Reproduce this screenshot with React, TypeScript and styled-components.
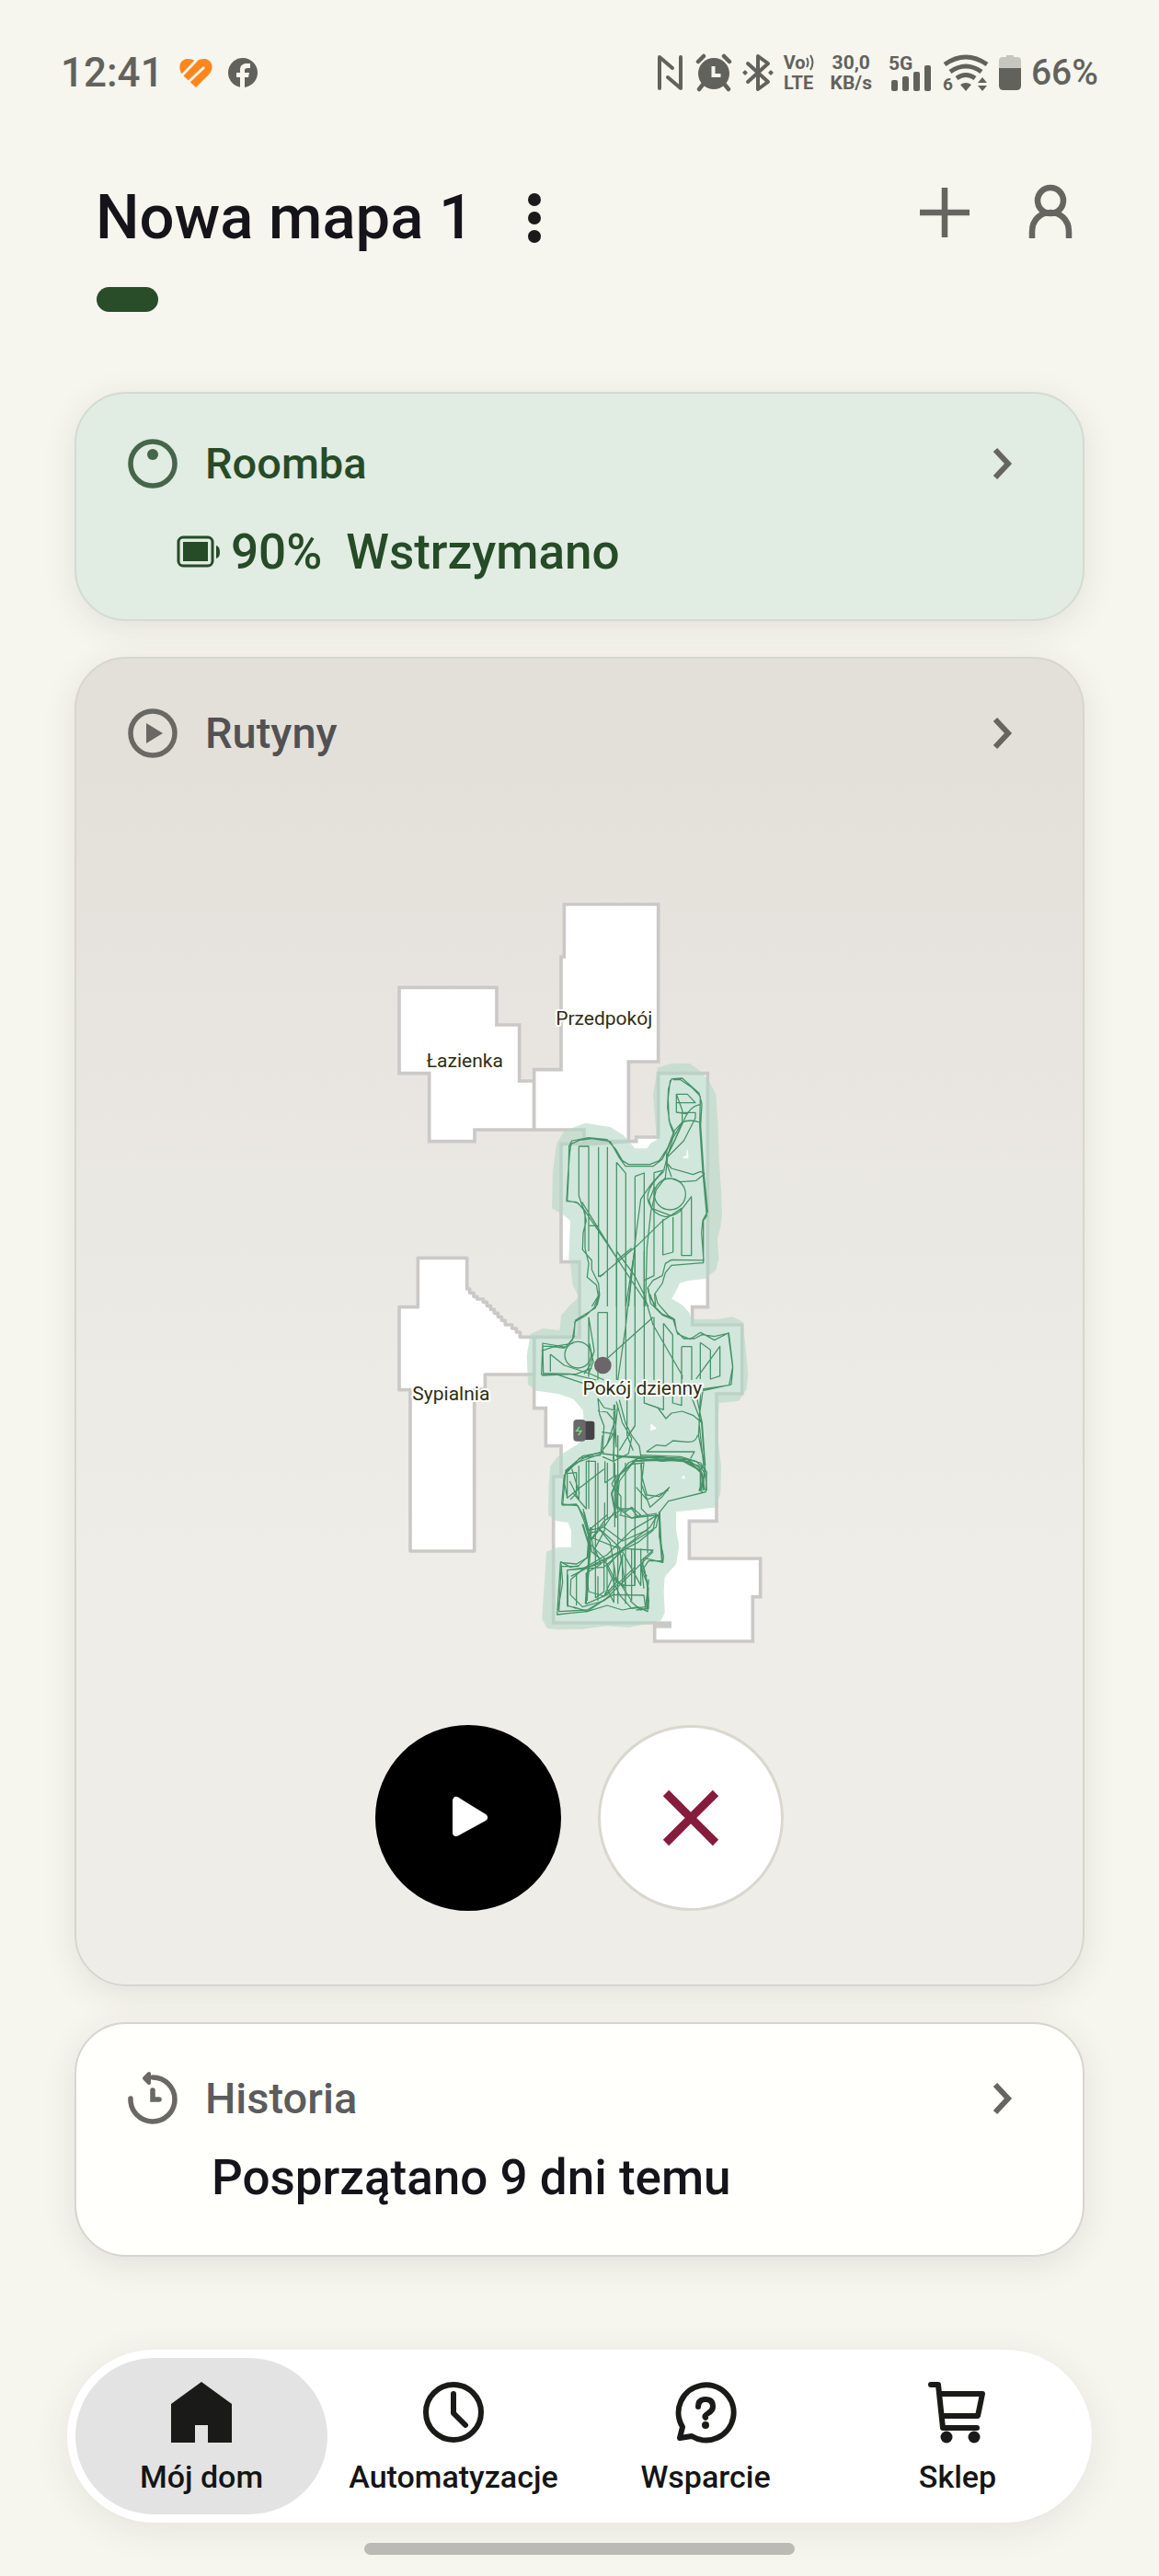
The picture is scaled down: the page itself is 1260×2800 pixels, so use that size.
import React from "react";
import styled, { createGlobalStyle } from "styled-components";

const GlobalStyle = createGlobalStyle`
  * { box-sizing: border-box; }
  body { margin: 0; background: #f6f5ee; }
  button { font: inherit; color: inherit; border: 0; padding: 0; background: none; cursor: pointer; }
  svg { display: block; flex: none; overflow: visible; }
`;

const Page = styled.div`
  display: flex;
  flex-direction: column;
  min-height: 100vh;
  background: #f6f5ee;
  color: #15141a;
  font-family: Roboto, "Noto Sans", sans-serif;
  font-weight: 500;
`;

const StatusBar = styled.div`
  display: flex;
  justify-content: space-between;
  align-items: center;
  padding: 54px 66px 0;
  height: 104px;
  color: #62625c;
`;

const StatusGroup = styled.div<{ $gap: number }>`
  display: flex;
  align-items: center;
  gap: ${(p) => p.$gap}px;
`;

const Clock = styled.time`
  font-size: 44px;
  line-height: 50px;
`;

const Percent = styled.span`
  font-size: 39px;
  line-height: 50px;
`;

const Stack = styled.div<{ $size: number; $side?: number }>`
  display: flex;
  flex-direction: column;
  align-items: center;
  margin: 0 ${(p) => p.$side || 0}px;
  font-size: ${(p) => p.$size}px;
  line-height: 22px;
  font-weight: 700;
`;

const VoRow = styled.span`
  display: flex;
  align-items: center;
`;

const Header = styled.header`
  display: flex;
  justify-content: space-between;
  align-items: flex-start;
  padding: 92px 92px 0 104px;
`;

const TitleRow = styled.div`
  display: flex;
  align-items: center;
  gap: 51px;
`;

const Title = styled.h1`
  margin: 0;
  font-size: 67px;
  line-height: 80px;
  font-weight: 500;
`;

const Actions = styled.div`
  display: flex;
  align-items: center;
  gap: 58px;
  height: 68px;
`;

const IconButton = styled.button`
  display: flex;
  align-items: center;
  justify-content: center;
  color: #666560;
`;

const PagePill = styled.div`
  width: 67px;
  height: 27px;
  margin: 36px 0 87px 105px;
  border-radius: 14px;
  background: #294d29;
`;

const Cards = styled.main`
  display: flex;
  flex-direction: column;
  gap: 39px;
  padding: 0 81px;
`;

const Card = styled.section<{ $bg: string; $pad: string; $border?: string }>`
  display: flex;
  flex-direction: column;
  padding: ${(p) => p.$pad};
  border: 2px solid ${(p) => p.$border || "#d6d6cf"};
  border-radius: 56px;
  background: ${(p) => p.$bg};
  box-shadow: 0 8px 36px rgba(60, 50, 60, 0.1);
`;

const CardHead = styled.button<{ $color: string }>`
  display: flex;
  align-items: center;
  gap: 30px;
  height: 60px;
  color: ${(p) => p.$color};
  font-size: 47px;
  line-height: 60px;
  text-align: left;
`;

const CardTitle = styled.span`
  flex: 1;
`;

const RobotStatus = styled.div`
  display: flex;
  align-items: center;
  margin: 34px 0 0 53px;
  color: #264b27;
  font-size: 53px;
  line-height: 64px;
`;

const Charge = styled.span`
  margin: 0 26px 0 9px;
`;

const HistoryText = styled.p`
  margin: 24px 0 0 91px;
  font-size: 53px;
  line-height: 64px;
`;

const MapBox = styled.div`
  display: flex;
  justify-content: center;
  margin-top: 133px;
`;

const Controls = styled.div`
  display: flex;
  justify-content: center;
  gap: 40px;
  margin-top: 75px;
`;

const RoundButton = styled.button<{ $dark?: boolean }>`
  display: flex;
  align-items: center;
  justify-content: center;
  width: 202px;
  height: 202px;
  border-radius: 50%;
  background: ${(p) => (p.$dark ? "#000" : "#fff")};
  border: 3px solid ${(p) => (p.$dark ? "#000" : "#d9d8cf")};
`;

const TabBar = styled.nav`
  display: grid;
  grid-template-columns: repeat(4, 1fr);
  margin: 101px 73px 0;
  padding: 9px;
  border-radius: 94px;
  background: #fff;
  box-shadow: 0 8px 40px rgba(60, 60, 50, 0.09);
`;

const Tab = styled.a<{ $active?: boolean }>`
  display: flex;
  flex-direction: column;
  align-items: center;
  gap: 17px;
  height: 170px;
  padding-top: 26px;
  border-radius: 85px;
  background: ${(p) => (p.$active ? "#e3e3e3" : "transparent")};
  color: #151515;
  font-size: 34px;
  line-height: 40px;
  text-decoration: none;
`;

const HomeBar = styled.div`
  align-self: center;
  width: 468px;
  max-width: 60%;
  height: 13px;
  margin: 22px 0 23px;
  border-radius: 7px;
  background: #bbbab5;
`;

const Chevron = () => (
  <svg width="56" height="56" viewBox="0 0 56 56" fill="none" stroke="#666560" strokeWidth="6">
    <path d="M17 13 31 28 17 43" />
  </svg>
);

const HeartIcon = () => (
  <svg width="36" height="32" viewBox="0 0 36 32" fill="none" stroke="#f6f5ee" strokeWidth="3">
    <path d="M18 32L4 19C-3 11 1 1 9 1C13 1 16 2 18 4C20 2 23 1 27 1C35 1 39 11 32 18Z" fill="#ff861c" stroke="none" />
    <path d="M19 2L2 20M27 10L10 26" />
  </svg>
);

const FacebookIcon = () => (
  <svg width="32" height="32" viewBox="0 0 32 32">
    <circle cx="16" cy="16" r="16" fill="#62625c" />
    <path d="M13 32V21H9v-5h4v-3c0-5 3-7 7-7h4v5h-3c-2 0-3 1-3 2v3h5l-1 5h-4v11Z" fill="#f6f5ee" />
  </svg>
);

const NfcIcon = () => (
  <svg width="30" height="40" viewBox="0 0 30 40" fill="none" stroke="currentColor" strokeWidth="4" strokeLinecap="round" strokeLinejoin="round">
    <path d="M2 37V3l14 12M25 3v34L11 25" />
  </svg>
);

const AlarmIcon = () => (
  <svg width="40" height="40" viewBox="0 0 40 40" fill="none" stroke="currentColor" strokeLinecap="round">
    <circle cx="20" cy="21" r="17" fill="currentColor" stroke="none" />
    <path d="M3 8l6-6M37 8l-6-6M8 33l-4 5M32 33l4 5" strokeWidth="4.5" />
    <path d="M19.500 13v10h8" stroke="#f6f5ee" strokeWidth="4" strokeLinecap="butt" />
  </svg>
);

const BluetoothIcon = () => (
  <svg width="34" height="40" viewBox="0 0 34 40" fill="none" stroke="currentColor" strokeWidth="4" strokeLinejoin="round" strokeLinecap="round">
    <path d="M6 10l22 20-11 8V2l11 8L6 30" />
    <path d="M3 18l2 2-2 2-2-2ZM31 18l2 2-2 2-2-2Z" fill="currentColor" strokeWidth="1.500" />
  </svg>
);

const VoWaves = () => (
  <svg width="9" height="18" viewBox="0 0 9 18" fill="none" stroke="currentColor" strokeWidth="2">
    <path d="M1 4q3 5 0 10M5 1q5 8 0 16" />
  </svg>
);

const SignalIcon = () => (
  <svg width="48" height="52" viewBox="0 -6 48 52" fill="currentColor">
    <text x="0" y="17" fontSize="21" fontWeight="700">5G</text>
    <rect x="3" y="28" width="7" height="12" rx="2" />
    <rect x="15" y="24" width="7" height="16" rx="2" />
    <rect x="27" y="19" width="7" height="21" rx="2" />
    <rect x="39" y="12" width="7" height="28" rx="2" />
  </svg>
);

const WifiIcon = () => (
  <svg width="50" height="52" viewBox="0 -6 50 52" fill="none" stroke="currentColor" strokeWidth="5">
    <path d="M2 11Q25-5 48 11M8 19q17-12 34 0M15 26q10-7 20 0" />
    <path d="M19 33q6-4 12 0l-6 7ZM38 31l5-6 5 6ZM38 34l5 6 5-6Z" fill="currentColor" stroke="none" />
    <text x="0" y="39" fontSize="19" fontWeight="700" fill="currentColor" stroke="none">6</text>
  </svg>
);

const PhoneBattery = () => (
  <svg width="24" height="40" viewBox="0 0 24 40">
    <path d="M8 1h8v2h4q4 0 4 4v9H0V7q0-4 4-4h4Z" fill="#c6c6c1" />
    <path d="M0 15h24v19q0 5-5 5H5q-5 0-5-5Z" fill="#62625c" />
  </svg>
);

const RobotBattery = () => (
  <svg width="50" height="36" viewBox="0 0 50 36">
    <rect x="2" y="2" width="37" height="31" rx="5" fill="none" stroke="#264b27" strokeWidth="3" />
    <rect x="7" y="7" width="27" height="21" fill="#264b27" />
    <path d="M43 11q4 1 4 7t-4 7Z" fill="#264b27" />
  </svg>
);

// Coordinates of the floor plan are three units to the CSS pixel.
const FloorMap = () => (
  <svg width="420" height="840" viewBox="0 0 1260 2520" fill="none" role="img" aria-label="Mapa mieszkania">
    <g fill="#fff" stroke="#cac9c8" strokeWidth="11">
      <path d="M42 340H360V462H434V645H482V804H288V842H140V620H42Z" />
      <path d="M580 69H887V582H790V842H645V804H482V608H570V240H580Z" />
      <path d="M887 620H1048V1382H998V1440H1160V1665H1077V2080H988V2202H1220V2327H1195V2472H875V2412H545V1935H570V1835H520V1712H482V1480H630V1235H570V850H680L790 842H815V828H887Z" />
      <path d="M103 1222H263V1323H272V1336H285V1348H296V1356H316V1366H328V1378H340V1390H352V1402H364V1414H376V1426H388V1440H410V1452H424V1464H436V1480H482V1602H322V1650H287V2178H78V1652H42V1382H103Z" strokeLinejoin="round" />
    </g>
    <path d="M870 2418H930" stroke="#cac9c8" strokeWidth="22" />

    <path
      d="M885 602L930 588L990 588L1020 610L1050 640L1075 690L1082 800L1085 900L1092 1000L1095 1080L1090 1120L1080 1160L1084 1225L1075 1262L1050 1280L1042 1290L985 1296L957 1304L945 1330L930 1355L965 1375L988 1400L995 1422L1080 1422L1130 1414L1164 1432L1170 1500L1180 1600L1175 1650L1150 1688L1085 1695L1080 1800L1092 1900L1090 1990L1072 2036L945 2050L945 2110L955 2160L945 2220L908 2262L905 2310L908 2380L895 2405L850 2415L790 2427L720 2422L640 2432L560 2434L525 2430L508 2400L512 2330L518 2250L522 2180L560 2165L602 2165L603 2110L592 2084L555 2080L528 2060L530 1960L535 1900L560 1868L620 1832L645 1810L642 1720L610 1682L560 1665L490 1655L462 1635L458 1540L470 1470L510 1452L565 1458L570 1410L600 1375L628 1350L608 1310L600 1240L595 1225L600 1100L575 1080L540 1060L543 940L555 850L580 808L650 782L730 795L775 823L800 852L810 865H850L865 845L882 838L875 750L870 690Z"
      fill="#b4d9c5"
      fillOpacity=".62"
    />
    <path d="M982 870l-2 18-12 6 16 2ZM864 1764l16 14-18 6ZM964 1938l7-6 2 9Z" fill="#fff" stroke="#fff" strokeWidth="3" />

    <g stroke="#469268" strokeWidth="3.800" strokeLinejoin="round">
      {/* northern part of the living room */}
      <g transform="translate(420 540)">
        <path d="M175 320L185 300L240 290L300 296L330 330L350 365L370 377H440L470 365L500 320L520 270M183 310L210 298L250 293L310 302L340 355L360 383H450L480 360L500 320" />
        <path d="M183 308L178 340L172 420L168 497L200 500L222 520L232 560L222 600L220 655L250 690V720L272 765L275 800L250 840M176 315L174 420L170 495L205 503L228 530L228 650L240 700L235 745L265 770L272 810L258 840" />
        <path d="M510 98L545 96L600 145L609 180L605 250L615 400L628 530L612 560L608 600L615 690L510 688L490 700L480 740L450 755L432 780L440 810L460 840M515 101L540 101L575 125L604 155L602 250L612 400L625 545L614 560V698L510 706L490 730L480 765L455 800L458 840" />
        <path d="M510 98L500 130L497 190L505 245L515 272L545 240M506 102L499 160L502 235L518 270L495 330L493 370M526 148H562L588 176H526ZM526 176V207L560 212M545 208H588V226L550 300L520 330L500 350M526 148L545 200V240L520 300L498 345L490 420L460 460L443 530L430 650L425 840" />
        <path d="M605 182Q570 185 550 235L520 300L495 350V375L510 418M602 240Q570 228 545 240L515 290L500 340L485 395M498 375L510 390L580 410L605 400L618 408L590 430L540 434L515 425" />
        <circle cx="505" cy="474" r="51" />
        <path d="M480 400L445 440L410 490L395 600L370 840M485 400Q420 460 435 500Q450 540 490 548Q530 545 550 515L575 482V674H543V520L500 549L482 560L400 640L275 745M455 450L437 495L445 520L510 545M482 555V672L515 663V549" />
        <path d="M208 318H240V660M208 318V480L222 520L330 680L435 840M272 320V742L290 735M301 320V840M331 370L361 406V840M331 370V840M391 416L421 405V755L453 740V404L488 395M391 416V840M240 577H270M218 500L330 680M330 690L380 650M421 755V840M361 840L391 650" />
      </g>
      {/* middle part with both bays */}
      <g transform="translate(420 1200)">
        <path d="M272 130L275 145L268 175L230 210L195 230L192 280L165 313L90 300L86 402L140 403L240 437M276 140L262 185L197 225L187 290L160 316L115 310L90 310L92 398L180 400L265 420M86 325L130 310L190 300" />
        <circle cx="205" cy="338" r="43" />
        <path d="M115 336V393M115 336L160 372L250 402L290 420M240 215V410M240 215L258 325L245 370L225 400M270 200H301V395M270 200V420M300 350L450 215M88 405L200 400L250 382M242 300L255 360L240 400" />
        <path d="M331 10V420M361 10V420M391 0V570L370 600M421 0V495L484 517V417M331 0L390 80L420 140L450 240L545 405V417M385 30L360 250L335 420M453 215V420M484 235L514 273V420M484 235V420M543 311H576V420M543 311V420M604 298L637 322V417L668 407V310L590 417M604 298V417M514 417V495L543 503V417" />
        <path d="M440 140L455 180L480 205L515 220L530 270L570 287L605 265L650 290L695 267L710 380L705 435L612 455M457 140L465 170L500 210L520 222L526 260L550 285L585 285L610 272L650 278L697 267L710 375L698 437L612 450M434 120L442 170L480 208L520 225" />
        <path d="M421 495L465 510L492 546L510 528L545 522L580 535L612 562M590 465L610 560L620 700M612 458L603 520L598 600L610 660L620 690M575 475L608 560L625 780M595 600Q590 625 560 622L515 618L490 635L460 632L428 654M428 654H585L572 676M605 460L600 560L615 700" />
        <path d="M270 480L275 530L290 570L285 660M325 500L330 640M340 485L360 560L380 600L405 635L412 680M330 490L350 560L380 610L370 660L320 685L285 670M270 480L290 510L330 520M283 590L320 595L300 630L280 655M335 500L325 600L320 680M322 500V640M390 570L370 600L340 650M270 520L300 525L325 555L300 630M365 480V600L385 650" />
      </g>
      {/* densely covered south */}
      <g transform="translate(420 1800)">
        <path d="M285 0L280 55L230 70L190 100L160 130L152 225L205 230L225 280L240 330L235 400L200 420L148 415L137 585L180 580L235 575L300 555L350 570L400 560L432 575L436 540L430 480L412 440L420 400L482 415L484 395L470 330L472 250L500 215L622 185L625 120L605 90L540 75L410 72L370 90L340 130L330 180L330 235L380 270L468 260" />
        <path d="M290 55L220 68L165 115L155 228L200 225L222 260L240 310L238 395L205 428L150 428L143 575L235 570L320 520L420 522L425 560L380 565L340 520L300 430L350 370L460 300L468 260M283 60L200 90L165 120L160 150L170 205L200 180L290 110M280 65L210 75L165 125" />
        <path d="M410 65L540 70L590 85L618 110L612 180M605 100L620 130L600 180L612 185M380 85L540 80L600 100L615 150L605 182M400 75L480 85L560 78L610 112M330 235L340 150L380 95L420 90L412 160L440 235L480 200L503 170L470 200L430 195L415 140L410 95M395 170L430 210L500 180M285 60L400 75L380 95" />
        <path d="M170 205V125L200 122V190L180 210M185 110L210 190M178 150L208 210V100M232 85H262V300M232 85V240L190 190M240 80V240M270 90V310M301 90V275M293 85V155L322 135V0M325 90V300M335 0V550M360 90V550M391 90V490M412 90V240L432 260V385M315 160L345 200V260M315 160L330 130V240L290 300" />
        <path d="M222 240L240 330L340 370L360 490M292 220V310L260 370L280 420L232 450V550L300 520L390 430M250 300L240 400L232 500M262 300V530L290 510V400L240 350L290 280L350 240L380 240L400 265L460 255L450 310L400 350L300 400L240 430L170 440V555L200 565M200 450V555M170 440L290 430L360 370L450 375L410 410L420 500M182 460L240 430L300 410" />
        <path d="M350 370L440 300L465 260L380 310L300 390L230 430L182 470L180 520L220 560L290 540L450 380M345 370L280 310L240 320L250 380L300 420L330 480L360 490M290 290L250 340L260 390L290 410L350 375M330 230L360 250L380 235L410 260L380 270L340 260M232 450L240 510L290 525L330 480L350 390V490L390 490V370M300 420V500L322 545V420M360 500L320 460L290 525M270 460V540M410 370V490L350 380M380 540V370M340 480L380 540M430 460L415 440L435 410L480 410M420 430L435 500L430 565L410 570L375 540M436 470L425 565" />
        <path d="M415 415L430 480L435 565L395 570M245 300L235 540M225 250L240 310L300 260M148 412L180 430L210 425M140 570L155 480L150 420M172 455V560M190 560L235 575L300 530M240 310L290 300L350 345L430 310M270 300L310 350L330 470" />
      </g>
      <path d="M750 1870L900 1872L990 1888L1030 1925L1037 1980M750 2070L735 1990L760 1930L810 1885L880 1878L970 1885L1025 1915L1025 1980M640 2090L665 2170L655 2290L650 2350M890 2050L895 2150L900 2215" strokeWidth="6" />
    </g>

    <circle cx="706" cy="1572" r="28" fill="#6b666a" />
    <rect x="640" y="1754" width="39" height="61" rx="8" fill="#454346" />
    <rect x="610" y="1749" width="40" height="71" rx="11" fill="#69696b" />
    <path d="M630 1773L620 1786H636L626 1800" stroke="#6ee67b" strokeWidth="4" />

    <g fontSize="63" fontWeight="400" fill="#2f2d10" stroke="#fff" strokeWidth="12" strokeLinejoin="round" textAnchor="middle" paintOrder="stroke">
      <text x="256" y="599">Łazienka</text>
      <text x="710" y="462">Przedpokój</text>
      <text x="211" y="1686">Sypialnia</text>
      <text x="835" y="1667">Pokój dzienny</text>
    </g>
  </svg>
);

export default function App() {
  return (
    <Page>
      <GlobalStyle />
      <StatusBar>
        <StatusGroup $gap={17}>
          <Clock>12:41</Clock>
          <HeartIcon />
          <FacebookIcon />
        </StatusGroup>
        <StatusGroup $gap={11}>
          <NfcIcon />
          <AlarmIcon />
          <BluetoothIcon />
          <Stack $size={20}>
            <VoRow>Vo<VoWaves /></VoRow>
            <span>LTE</span>
          </Stack>
          <Stack $size={21} $side={7}>
            <span>30,0</span>
            <span>KB/s</span>
          </Stack>
          <SignalIcon />
          <WifiIcon />
          <PhoneBattery />
          <Percent>66%</Percent>
        </StatusGroup>
      </StatusBar>

      <Header>
        <TitleRow>
          <Title>Nowa mapa 1</Title>
          <IconButton aria-label="Więcej">
            <svg width="30" height="60" viewBox="0 0 30 60" fill="#1a1a18">
              <circle cx="15" cy="11" r="7" />
              <circle cx="15" cy="31" r="7" />
              <circle cx="15" cy="51" r="7" />
            </svg>
          </IconButton>
        </TitleRow>
        <Actions>
          <IconButton aria-label="Dodaj">
            <svg width="60" height="60" viewBox="0 0 60 60" stroke="currentColor" strokeWidth="6.500">
              <path d="M29 4V58M2 31H56" />
            </svg>
          </IconButton>
          <IconButton aria-label="Konto">
            <svg width="52" height="60" viewBox="0 0 52 60" fill="none" stroke="currentColor" strokeWidth="6.500">
              <circle cx="26" cy="18" r="14" />
              <path d="M6 59V52C6 24 46 24 46 52V59" />
            </svg>
          </IconButton>
        </Actions>
      </Header>
      <PagePill />

      <Cards>
        <Card $bg="#e1ece2" $pad="46px 56px 41px" $border="#d3dbd2">
          <CardHead $color="#264b27">
            <svg width="54" height="54" viewBox="0 0 54 54">
              <circle cx="27" cy="27" r="24" fill="none" stroke="#45664a" strokeWidth="5.500" />
              <circle cx="27" cy="17" r="6" fill="#45664a" />
            </svg>
            <CardTitle>Roomba</CardTitle>
            <Chevron />
          </CardHead>
          <RobotStatus>
            <RobotBattery />
            <Charge>90%</Charge>
            <span>Wstrzymano</span>
          </RobotStatus>
        </Card>

        <Card $bg="linear-gradient(#e3e0da 0, #e3e0da 120px, #eae8e3 600px, #eeede8 1000px)" $pad="51px 56px 80px">
          <CardHead $color="#525153">
            <svg width="54" height="54" viewBox="0 0 54 54">
              <circle cx="27" cy="27" r="24" fill="none" stroke="#6a6863" strokeWidth="5.500" />
              <path d="M20 16 38 27 20 38Z" fill="#6a6863" />
            </svg>
            <CardTitle>Rutyny</CardTitle>
            <Chevron />
          </CardHead>
          <MapBox>
            <FloorMap />
          </MapBox>
          <Controls>
            <RoundButton $dark aria-label="Wznów">
              <svg width="60" height="60" viewBox="0 0 60 60" fill="#fff" stroke="#fff" strokeWidth="8" strokeLinejoin="round">
                <path d="M17 11V46L47 29.500Z" />
              </svg>
            </RoundButton>
            <RoundButton aria-label="Zakończ">
              <svg width="66" height="66" viewBox="0 0 66 66" stroke="#861b3c" strokeWidth="9">
                <path d="M6 6 60 60M60 6 6 60" />
              </svg>
            </RoundButton>
          </Controls>
        </Card>

        <Card $bg="#fffffb" $pad="51px 56px 52px">
          <CardHead $color="#5c5b5d">
            <svg width="54" height="58" viewBox="0 0 54 58" fill="none" stroke="#6a6863" strokeWidth="5.500" strokeLinecap="round">
              <path d="M27 6A24 24 0 1 1 3 29" />
              <path d="M27 20V30H34" />
              <path d="M23 2 18 7 23 12Z" fill="#6a6863" strokeLinejoin="round" strokeWidth="4" />
            </svg>
            <CardTitle>Historia</CardTitle>
            <Chevron />
          </CardHead>
          <HistoryText>Posprzątano 9 dni temu</HistoryText>
        </Card>
      </Cards>

      <TabBar>
        <Tab href="#dom" $active aria-current="page">
          <svg width="66" height="66" viewBox="0 0 66 66" fill="#1a1a18">
            <path d="M33 0 66 24V66H40V47H26V66H0V24Z" />
          </svg>
          Mój dom
        </Tab>
        <Tab href="#automatyzacje">
          <svg width="66" height="66" viewBox="0 0 66 66" fill="none" stroke="#1a1a18" strokeWidth="6" strokeLinecap="round" strokeLinejoin="round">
            <circle cx="33" cy="33" r="30" />
            <path d="M33 13V34L46 47" />
          </svg>
          Automatyzacje
        </Tab>
        <Tab href="#wsparcie">
          <svg width="66" height="66" viewBox="0 0 66 66" fill="none" stroke="#1a1a18" strokeWidth="6" strokeLinejoin="round">
            <path d="M8 49A30 30 0 1 1 18 59L5 61Z" />
            <path d="M25 27Q25 19 33 19T41 27Q41 31 36 34T33 39" strokeLinecap="round" />
            <circle cx="33" cy="47" r="4" fill="#1a1a18" stroke="none" />
          </svg>
          Wsparcie
        </Tab>
        <Tab href="#sklep">
          <svg width="66" height="66" viewBox="0 0 66 66" fill="none" stroke="#1a1a18" strokeWidth="6" strokeLinecap="round" strokeLinejoin="round">
            <path d="M4 3H12L17 50H54M14 13H60L55 37H16" />
            <circle cx="21" cy="60" r="6.500" fill="#1a1a18" stroke="none" />
            <circle cx="51" cy="60" r="6.500" fill="#1a1a18" stroke="none" />
          </svg>
          Sklep
        </Tab>
      </TabBar>
      <HomeBar />
    </Page>
  );
}
